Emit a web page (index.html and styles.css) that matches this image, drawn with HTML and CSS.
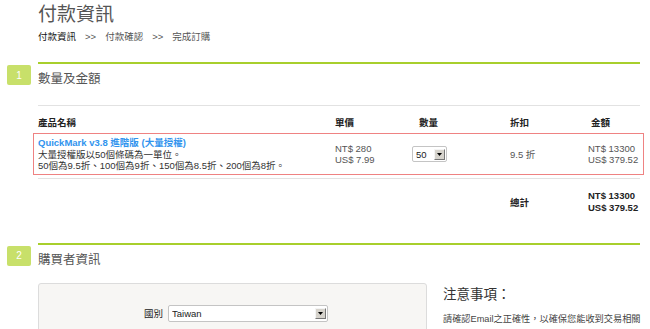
FILE: index.html
```html
<!DOCTYPE html>
<html lang="zh-Hant">
<head>
  <meta charset="UTF-8">
  <meta name="viewport" content="width=device-width, initial-scale=1.0">
  <title>付款資訊</title>
  <link rel="stylesheet" href="styles.css">
</head>
<body>
  <div class="page">
    <h1 class="title">付款資訊</h1>
    <div class="crumbs">
      <span class="on">付款資訊</span>
      <span>&gt;&gt;</span>
      <span>付款確認</span>
      <span>&gt;&gt;</span>
      <span>完成訂購</span>
    </div>

    <section class="step">
      <div class="step-head">
        <span class="step-num">1</span>
        <h2>數量及金額</h2>
      </div>

      <div class="order">
        <div class="order-head">
          <div>產品名稱</div>
          <div>單價</div>
          <div class="c-qty">數量</div>
          <div>折扣</div>
          <div class="c-amt">金額</div>
        </div>

        <div class="order-row">
          <div class="prod">
            <a class="prod-name" href="#">QuickMark v3.8 進階版 (大量授權)</a>
            <div>大量授權版以50個條碼為一單位。</div>
            <div>50個為9.5折、100個為9折、150個為8.5折、200個為8折。</div>
          </div>
          <div class="money">NT$ 280<br>US$ 7.99</div>
          <div>
            <div class="pick pick-qty">
              <select>
                <option>50</option>
                <option>100</option>
                <option>150</option>
                <option>200</option>
              </select>
              <span class="pick-arrow"><svg width="5" height="3" viewBox="0 0 5 3"><path d="M0 0h5L2.5 3z" fill="#000"/></svg></span>
            </div>
          </div>
          <div class="disc">9.5 折</div>
          <div class="money">NT$ 13300<br>US$ 379.52</div>
        </div>

        <div class="order-total">
          <div></div>
          <div></div>
          <div></div>
          <div class="total-label">總計</div>
          <div class="total-sum">NT$ 13300<br>US$ 379.52</div>
        </div>
      </div>
    </section>

    <section class="step">
      <div class="step-head">
        <span class="step-num">2</span>
        <h2>購買者資訊</h2>
      </div>

      <div class="buyer">
        <div class="panel">
          <div class="field">
            <label for="country">國別</label>
            <div class="pick">
              <select id="country">
                <option>Taiwan</option>
                <option>Japan</option>
                <option>United States</option>
              </select>
              <span class="pick-arrow"><svg width="5" height="3" viewBox="0 0 5 3"><path d="M0 0h5L2.5 3z" fill="#000"/></svg></span>
            </div>
          </div>
        </div>
        <div class="notes">
          <h3>注意事項：</h3>
          <p>請確認Email之正確性，以確保您能收到交易相關之通知信函與授權碼。</p>
        </div>
      </div>
    </section>
  </div>
</body>
</html>
```

FILE: styles.css
```css
body {
  margin: 0;
  font-family: "Liberation Sans", "Noto Sans CJK TC", sans-serif;
  font-size: 9.5px;
  color: #333;
  background: #fff;
}
.page {
  padding: 0 10px 0 38px;
}
.title {
  margin: 3px 0 0;
  font-size: 19px;
  line-height: 24px;
  font-weight: normal;
  color: #555;
}
.crumbs {
  display: flex;
  gap: 9px;
  margin-top: 4px;
  line-height: 12px;
  color: #555;
}
.crumbs .on {
  color: #111;
}
.step {
  margin-top: 19px;
  border-top: 2px solid #a8cf2c;
}
.step + .step {
  margin-top: 29px;
}
.step-head {
  display: flex;
  align-items: flex-start;
}
.step-num {
  width: 24px;
  height: 20px;
  margin: 1px 7px 0 -31px;
  background: #c8e06a;
  color: #fff;
  border-radius: 2px;
  display: flex;
  align-items: center;
  justify-content: center;
  font-size: 10px;
}
.step-head h2 {
  margin: 5px 0 0;
  font-size: 12.5px;
  line-height: 20px;
  font-weight: normal;
  color: #555;
}
.order {
  margin-top: 16px;
  border-top: 1px solid #e2e2e2;
}
.order-head, .order-row, .order-total {
  display: grid;
  grid-template-columns: 297px 77px 98px 78px 1fr;
}
.order-head {
  padding-top: 11px;
  line-height: 12px;
  font-weight: bold;
  color: #222;
}
.order-head .c-qty {
  padding-left: 7px;
}
.order-head .c-amt {
  padding-left: 3px;
}
.order-row {
  margin: 4px -4px 0 -5px;
  padding: 3px 3px 2px 4px;
  border: 1px solid #ef8282;
  align-items: center;
  line-height: 11.5px;
}
.prod-name {
  display: block;
  color: #3194ee;
  font-weight: bold;
  text-decoration: none;
}
.money {
  line-height: 11px;
  color: #555;
}
.disc {
  color: #555;
}
.pick {
  display: flex;
  align-items: center;
  width: 35px;
  height: 16px;
  box-sizing: border-box;
  border: 1px solid #c4c4c4;
  border-radius: 2px;
  background: #fff;
}
.pick select {
  flex: 1;
  min-width: 0;
  appearance: none;
  -webkit-appearance: none;
  border: none;
  background: transparent;
  padding: 0 0 0 3px;
  font: inherit;
  color: #222;
  outline: none;
}
.pick-arrow {
  width: 11px;
  height: 11px;
  margin-right: 1px;
  box-sizing: border-box;
  background: #d6d3cc;
  border: 1px solid;
  border-color: #f4f4f4 #777 #777 #f4f4f4;
  display: flex;
  align-items: center;
  justify-content: center;
}
.order-total {
  margin-top: 3px;
  border-top: 1px solid #e2e2e2;
  padding-top: 11px;
  align-items: center;
  font-weight: bold;
  color: #222;
}
.total-sum {
  line-height: 12px;
}
.buyer {
  display: flex;
  gap: 16px;
  margin-top: 13px;
}
.panel {
  width: 389px;
  height: 130px;
  box-sizing: border-box;
  padding-top: 21px;
  background: #f7f6f4;
  border: 1px solid #dcdcdc;
  border-radius: 3px;
}
.field {
  display: grid;
  grid-template-columns: 129px 160px;
  align-items: center;
}
.field label {
  text-align: right;
  padding-right: 5px;
  color: #222;
}
.field .pick {
  width: 160px;
  height: 17px;
}
.notes {
  flex: 1;
  margin-right: -4px;
}
.notes h3 {
  margin: 3px 0 0;
  font-size: 13.5px;
  line-height: 18px;
  font-weight: normal;
  color: #333;
}
.notes p {
  margin: 6px 0 0;
  font-size: 9.2px;
  line-height: 18px;
  color: #444;
}
```
